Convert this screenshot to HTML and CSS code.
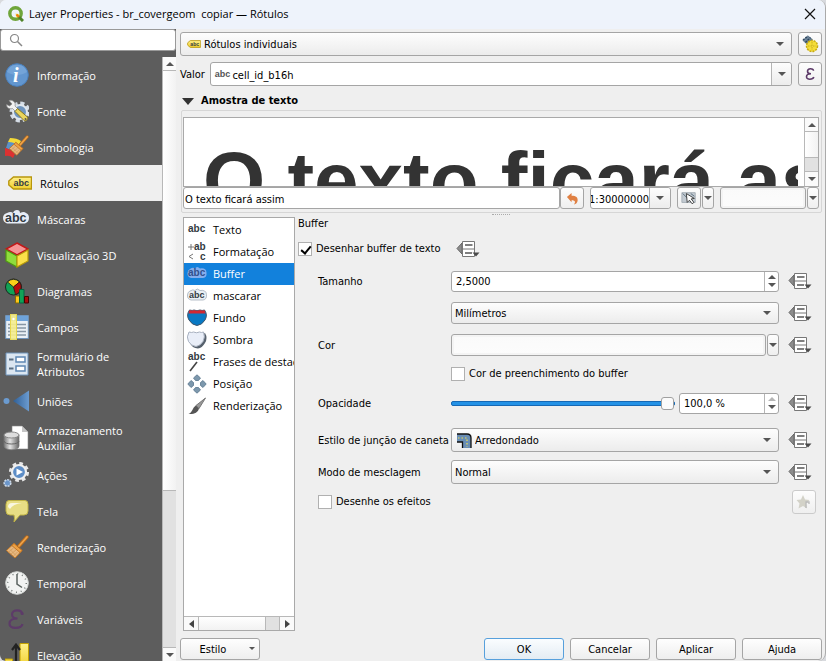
FILE: index.html
```html
<!DOCTYPE html>
<html lang="pt-BR">
<head>
<meta charset="utf-8">
<meta name="viewport" content="width=device-width, initial-scale=1">
<title>Layer Properties - br_covergeom  copiar — Rótulos</title>
<link rel="stylesheet" href="styles.css">
</head>
<body>
<svg class="defs" aria-hidden="true">
  <defs>
    <linearGradient id="g-blue" x1="0" x2="1"><stop offset="0" stop-color="#2f5f96"/><stop offset="1" stop-color="#6b9bd0"/></linearGradient>
    <linearGradient id="g-db" x1="0" x2="1"><stop offset="0" stop-color="#777"/><stop offset=".4" stop-color="#e4e4e4"/><stop offset="1" stop-color="#666"/></linearGradient>
    <linearGradient id="g-yellow" x1="0" y1="0" x2="0" y2="1"><stop offset="0" stop-color="#fff08a"/><stop offset="1" stop-color="#f0cf2c"/></linearGradient>
    <symbol id="i-dd" viewBox="0 0 24 18">
      <path d="M1 8.500 6 3v11z" fill="#8c8c8c" stroke="#666"/>
      <path d="M6.500 1.500h12v15h-12z" fill="#fff" stroke="#777"/>
      <path d="M6 9h13" stroke="#777"/>
      <path d="M9 5h7.500M9 13h7" stroke="#555" stroke-width="1.600"/>
      <path d="M16.500 12.500h7l-3.500 4z" fill="#4a4a4a"/>
    </symbol>
    <symbol id="i-broom" viewBox="0 0 24 24">
      <path d="m22 2-8 9" stroke="#b86a1b" stroke-width="3.400" stroke-linecap="round"/>
      <path d="m22 2-8 9" stroke="#eda34a" stroke-width="1.800" stroke-linecap="round"/>
      <path d="M1.500 15.500 9 8.500l8 7L10 23z" fill="#e6b780" stroke="#c07828"/>
      <path d="M9 8.500l8 7-2 2-8.200-7z" fill="#efa245" stroke="#b86a1b" stroke-width=".8"/>
      <path d="m5 14.500 6 6M3.500 17l5-4M6 19l5-4M8.500 21l4-4" stroke="#cf9a5c" stroke-width=".8"/>
    </symbol>
    <symbol id="i-tag" viewBox="0 0 24 14">
      <path d="M5.500 1h18v12h-18L.8 9V5z" fill="url(#g-yellow)" stroke="#b8960c" stroke-width="1.400"/>
      <text x="5.500" y="10" class="glyph" font-size="9">abc</text>
    </symbol>
  </defs>
</svg>

<div class="window">
  <header class="titlebar">
    <svg class="logo" viewBox="0 0 16 16"><circle cx="7.500" cy="7.500" r="5.700" fill="none" stroke="#6fa53a" stroke-width="3.400"/><path d="m7.500 7.500 4.500 1-3.500 3.500z" fill="#f0e64a"/><path d="m8.500 8.500 3.500 3.500" stroke="#ee7913" stroke-width="2"/><path d="m11 11 4 4" stroke="#4f8429" stroke-width="3"/></svg>
    <h1>Layer Properties - br_covergeom&nbsp; copiar — Rótulos</h1>
    <button class="close" aria-label="Fechar"><svg viewBox="0 0 12 12"><path d="m1 1 10 10M11 1 1 11" stroke="#111" stroke-width="1.200"/></svg></button>
  </header>

  <div class="body">
    <aside class="sidebar">
      <label class="search">
        <svg viewBox="0 0 14 14"><circle cx="5.500" cy="5.500" r="4" fill="none" stroke="#888" stroke-width="1.200"/><path d="m8.500 8.500 4.500 4.500" stroke="#888" stroke-width="1.500"/></svg>
        <input type="search" aria-label="Pesquisar">
      </label>
      <div class="side-scroll">
        <nav class="side-list">
          <button class="side-item"><svg viewBox="0 0 24 24"><circle cx="12" cy="12" r="11.300" fill="#6296cf" stroke="#4a80bd"/><path d="M2 9a10.500 10.500 0 0 1 20 0c-6 4-14 4-20 0z" fill="#80aede" opacity=".6"/><text x="8" y="19" font-family="Liberation Serif" font-style="italic" font-weight="700" font-size="20" fill="#fff">i</text></svg>Informação</button>
          <button class="side-item"><svg viewBox="0 0 24 24"><circle cx="15" cy="13" r="8.500" fill="none" stroke="#d5dde6" stroke-width="4" stroke-dasharray="4 2.675"/><circle cx="15" cy="13" r="7" fill="#6f94bd" stroke="#dfe6ed" stroke-width="2"/><path d="M4 1.500c4-1 7 2 6 5.500l3 3-2.500 2.500-3-3C4 10.500 1.500 8.500 1.500 5.500l3 1.500 2.500-2z" fill="#f3f3f3" stroke="#888" stroke-width=".7"/><path d="m12.500 9.500 10 8.500c1 2-1.500 4.500-3.500 3.500l-9-9z" fill="#e9d55c" stroke="#857522"/><circle cx="20.500" cy="20" r="1" fill="#555"/></svg>Fonte</button>
          <button class="side-item"><svg viewBox="0 0 24 24"><path d="M5 3q7 0 11 3l-3 6-10-5z" fill="#f4da37"/><path d="M3 7q7 0 10 4l-3 6-9-4z" fill="#5b91c8"/><path d="M0 13q4 0 10 6l-2 4q-3-3-8-2z" fill="#dc3131"/><use href="#i-broom" x="3" y="0" width="21" height="21"/></svg>Simbologia</button>
          <button class="side-item selected" aria-current="page"><svg viewBox="0 0 24 24"><use href="#i-tag" y="5" width="24" height="14"/></svg>Rótulos</button>
          <button class="side-item"><svg class="wide" viewBox="0 0 26 24"><path d="M4 6q4-2 6 0 1-3 4-3t3 3q4-2 6 0 3 1 3 5t-4 5.500H4Q0 15 0 11t4-5z" fill="#e7edf7"/><text x="2" y="15" class="glyph" font-size="12.500">abc</text></svg>Máscaras</button>
          <button class="side-item"><svg viewBox="0 0 24 26"><path d="m12 1 11 6-11 6L1 7z" fill="#f59595" stroke="#c01818" stroke-width="1.500"/><path d="M1 8l11 6v11L1 19z" fill="#8fdd3d" stroke="#4f9a10" stroke-width="1.200"/><path d="m23 8-11 6v11l11-6z" fill="#fbe04a" stroke="#b89a08" stroke-width="1.200"/></svg>Visualização 3D</button>
          <button class="side-item"><svg viewBox="0 0 24 26"><circle cx="8.500" cy="9" r="8" fill="#12a156" stroke="#111" stroke-width=".8"/><path d="M8.500 9 2.500 4a8 8 0 0 1 12 0z" fill="#fbd019" stroke="#332"/><path d="m8.500 9 6-5a8 8 0 0 1-4 12.500z" fill="#b40d0d" stroke="#311" stroke-width=".8"/><path d="M10.500 18h4v7h-4z" fill="#fbc61d" stroke="#8a6a00"/><path d="M14.500 11.500h4.500V25h-4.500z" fill="#12a156" stroke="#064"/><path d="M19.500 18.500H23.500V25h-4z" fill="#a60c0c" stroke="#400"/></svg>Diagramas</button>
          <button class="side-item"><svg viewBox="0 0 24 26"><path d="M.700 1.500h22.600v23H.700z" fill="#eaf0f6" stroke="#6f94bb"/><path d="M1 2h22v5H1z" fill="#6ea3da"/><path d="M3 10.500h18M3 14h18M3 17.500h18M3 21h18" stroke="#8796a5" stroke-width="1.500"/><path d="M5.500 0h6v26h-6z" fill="#f6ed8d" fill-opacity=".9" stroke="#e6d64c"/><circle cx="8.500" cy="5" r="1.200" fill="#fff"/></svg>Campos</button>
          <button class="side-item double"><svg viewBox="0 0 24 24"><path d="M1 1h22v22H1z" fill="#dbe6f1" stroke="#6f94bb"/><path d="M11 5h9v5h-9zM11 14h9v5h-9z" fill="#fff" stroke="#5e87b3" stroke-width="1.500"/><path d="M4 7.500h4.500M4 16.500h4.500" stroke="#5b6e82" stroke-width="2"/></svg><span>Formulário de Atributos</span></button>
          <button class="side-item"><svg class="wide" viewBox="0 0 26 24"><circle cx="3.500" cy="12" r="3" fill="#6b9bd0"/><path d="M10 12 26 1.500v21z" fill="url(#g-blue)"/></svg>Uniões</button>
          <button class="side-item double"><svg class="wide" viewBox="0 0 26 26"><path d="M9 1h10l6 6v17H9z" fill="#fff" stroke="#888" stroke-width=".6"/><path d="M19 1v6h6z" fill="#c5c5c5"/><path d="M1 10v11c0 5 15 5 15 0V10z" fill="url(#g-db)" stroke="#777" stroke-width=".7"/><ellipse cx="8.500" cy="10" rx="7.500" ry="3" fill="#ddd" stroke="#888"/><path d="M1 16c0 4 15 4 15 0" fill="none" stroke="#666"/></svg><span>Armazenamento Auxiliar</span></button>
          <button class="side-item"><svg class="wide" viewBox="0 0 26 26"><circle cx="16" cy="10" r="8.300" fill="none" stroke="#e7e7e7" stroke-width="3.500" stroke-dasharray="3.500 3.019"/><circle cx="16" cy="10" r="7" fill="#5d8dc6" stroke="#efefef" stroke-width="2.200"/><path d="m13.500 6.500 6.500 3.500-6.500 3.500z" fill="#fff"/><circle cx="4.500" cy="21" r="3.300" fill="#6b96ca" stroke="#ccd9e8" stroke-width="1.600" stroke-dasharray="2 .960"/></svg>Ações</button>
          <button class="side-item"><svg viewBox="0 0 24 24"><path d="M4 1.500h16q3 0 3 4V12q0 4-4 4h-4l-6 7q1-4 0-7H5q-4 0-4-4V5.500q0-4 3-4z" fill="#e7dd84" stroke="#c0b446"/><path d="M3 8q0-4 4-4h10q-9 1-12 6z" fill="#fff" opacity=".75"/></svg>Tela</button>
          <button class="side-item"><svg viewBox="0 0 24 24"><use href="#i-broom"/></svg>Renderização</button>
          <button class="side-item"><svg viewBox="0 0 24 24"><circle cx="12" cy="12" r="11.300" fill="#f2f3f2" stroke="#d1d4d2"/><circle cx="12" cy="12" r="9.300" fill="none" stroke="#747b78" stroke-width="1.500" stroke-dasharray="1 3.869"/><path d="M12 3v10l5 3.500" fill="none" stroke="#5a625f" stroke-width="1.500"/></svg>Temporal</button>
          <button class="side-item"><svg viewBox="0 0 24 24"><path d="M17.500 7.500C17 2 7 2 7 7.500c0 2.700 3 4 5.500 4-4.500 0-8 1.500-8 5 0 6 12 5.500 13 .5" fill="none" stroke="#5d3b69" stroke-width="2.200"/><circle cx="17" cy="6.500" r="1.500" fill="#5d3b69"/></svg>Variáveis</button>
          <button class="side-item"><svg viewBox="0 0 24 26"><path d="M15 1.500h8.500V26H15zM0 17h7.500v9H0z" fill="url(#g-yellow)" stroke="#c2a000"/><path d="M11 26V3M7 8l4-5.500L15 8" fill="none" stroke="#222" stroke-width="2.200"/></svg>Elevação</button>
        </nav>
        <div class="vbar"><button class="sb up" aria-label="Subir"></button><i class="thumb"></i><i class="track"></i><button class="sb down" aria-label="Descer"></button></div>
      </div>
    </aside>

    <main class="content">
      <div class="top-rows">
        <div class="combo tall">
          <svg class="tag" viewBox="0 0 24 14"><use href="#i-tag" width="24" height="14"/></svg>
          <select aria-label="Modo dos rótulos"><option>Rótulos individuais</option></select>
        </div>
        <button class="tool" aria-label="Posicionamento automático"><svg viewBox="0 0 18 18"><path d="m1.500 5.500 5.500-5 5 4-5 6z" fill="#6d8499"/><path d="m2 5 5-4M4.500 7.500l5-5M7 10l4-5" stroke="#2e4860" stroke-width="1.500" stroke-dasharray="2 1"/><circle cx="11" cy="11" r="5.500" fill="#f5dd37" stroke="#c8ab12" stroke-width="1.500" stroke-dasharray="2 1"/><path d="M11 7v8M7 11h8" stroke="#c9b021" stroke-dasharray="1.500 1"/></svg></button>
      </div>
      <div class="top-rows value-row">
        <label for="valor">Valor</label>
        <div class="combo tall editable">
          <span class="abc">abc</span>
          <input id="valor" value="cell_id_b16h">
          <button class="arrow" aria-label="Abrir lista"></button>
        </div>
        <button class="tool" aria-label="Expressão"><svg viewBox="0 0 18 18"><path d="M12.500 5.700C12.500 3 6.500 3 6.500 6.200c0 1.800 2 2.500 3.500 2.500-2.500 0-4.500 1-4.500 3 0 3.500 6.500 3 7.300.3" fill="none" stroke="#5d3b69" stroke-width="1.600"/></svg></button>
      </div>
      <h2 class="section"><i></i>Amostra de texto</h2>

      <section class="sample">
        <div class="preview">
          <div class="preview-text">O texto ficará assim</div>
          <div class="vbar"><button class="sb up" aria-label="Subir"></button><i class="thumb"></i><i class="track"></i><button class="sb down" aria-label="Descer"></button></div>
        </div>
        <div class="sample-tools">
          <input class="field" aria-label="Texto de amostra" value="O texto ficará assim">
          <button class="tool small undo" aria-label="Restaurar"><svg viewBox="0 0 14 14"><path d="M1 5.500 6 1v3c5 0 7 2 6.500 5.500-.3 2-1.500 3.500-4 4 1.800-2 2-4.500-2.500-4.500v2z" fill="#e08043"/></svg></button>
          <div class="combo editable scale"><input aria-label="Escala" value="1:30000000"><button class="arrow" aria-label="Abrir escalas"></button></div>
          <div class="pair">
            <button class="tool small" aria-label="Usar escala do mapa"><svg viewBox="0 0 18 16"><path d="M1 2h15v11H1z" fill="#c3cbd2" stroke="#a2abb3"/><path d="m2 3 5 5M11 3l4 3" stroke="#536878"/><path d="m6 3 1 10 2.500-2.500 3 4 2-1.500-3-4 3.500-.5z" fill="#fff" stroke="#333"/></svg></button>
            <button class="drop" aria-label="Opções"></button>
          </div>
          <div class="pair swatch-pair">
            <button class="swatch" aria-label="Cor de fundo"></button>
            <button class="drop" aria-label="Opções de cor"></button>
          </div>
        </div>
      </section>
      <div class="grip"></div>

      <div class="split">
        <div class="tabs">
          <nav class="tab-list">
            <button class="tab"><svg viewBox="0 0 20 20"><text x="1" y="12" class="glyph" font-size="10">abc</text></svg>Texto</button>
            <button class="tab"><svg viewBox="0 0 20 20"><text x="7" y="8" class="glyph" font-size="10">ab</text><text x="13" y="18" class="glyph" font-size="10">c</text><path d="M1 5h6M4 2v6M6 12l-4 2.500L6 17" fill="none" stroke="#777"/></svg>Formatação</button>
            <button class="tab selected" aria-current="true"><svg viewBox="0 0 20 20"><path d="M3 5q3-2 5-.500 2-3 5 0 6-1 6.500 4T16 14H4q-4-1-3.500-5Q.500 6 3 5z" fill="#85aeed"/><text x="1" y="12" class="glyph blue" font-size="10">abc</text></svg>Buffer</button>
            <button class="tab"><svg viewBox="0 0 20 20"><path d="M3 5q3-2 5-.500 2-3 5 0 6-1 6.500 4T16 14H4q-4-1-3.500-5Q.500 6 3 5z" fill="#e9eef3" stroke="#a4b0bb" stroke-width=".8"/><text x="2" y="12" class="glyph" font-size="9">abc</text></svg>mascarar</button>
            <button class="tab"><svg viewBox="0 0 20 20"><path d="M2.500 2q3 1 4.500 0 3 1.500 6 0 2 1 4.500 0Q21 7 18 12q-3 5-8 5.500Q5 17 2 12-1 7 2.500 2z" fill="#0879c4" stroke="#40566b"/><path d="M2.500 2q3 1 4.500 0 3 1.500 6 0 2 1 4.500 0l1 3.500h-17z" fill="#cf2832"/></svg>Fundo</button>
            <button class="tab"><svg viewBox="0 0 20 20"><path d="M4 3q3 1 4.500 0 3 1.500 6 0 2 1 3.500 0 3 5 0 10-3 5-7 5.500Q5 18 3 13 0 8 4 3z" fill="#56616d"/><path d="M2 2q3 1 4.500 0 3 1.500 6 0 2 1 4 0 2 5-.500 9.500Q13 16 9 16.500q-5-.500-7.500-5Q-1 7 2 2z" fill="#e9eef8" stroke="#a7b0bf"/></svg>Sombra</button>
            <button class="tab"><svg viewBox="0 0 20 20"><text x="1" y="8" class="glyph" font-size="10">abc</text><path d="m10 10-7 9" stroke="#444" stroke-width="1.600"/></svg>Frases de destaque</button>
            <button class="tab"><svg viewBox="0 0 20 20"><path d="m10 .800 3.500 3.200-2 2.500h-3l-2-2.500zM10 19.200l3.500-3.200-2-2.500h-3l-2 2.500zM.800 10 4 6.500l2.500 2v3L4 13.500zM19.200 10 16 6.500l-2.500 2v3l2.500 2z" fill="#7d98ad" stroke="#58758c" stroke-width=".8"/></svg>Posição</button>
            <button class="tab"><svg viewBox="0 0 20 20"><path d="M18.500 2 9 9.500l3 3z" fill="#999" stroke="#777"/><path d="m9 9.500 3 3c-1 4-5 6-10.500 5.500C6 16 5 12 9 9.500z" fill="#555"/></svg>Renderização</button>
          </nav>
          <div class="hbar"><button class="sb left" aria-label="Esquerda"></button><i class="thumb"></i><i class="track"></i><button class="sb right" aria-label="Direita"></button></div>
        </div>

        <form class="panel">
          <div class="panel-title">Buffer</div>
          <div class="head-row">
            <label class="check"><input type="checkbox" checked>Desenhar buffer de texto</label>
            <button type="button" class="dd" aria-label="Definido por dados"><svg><use href="#i-dd"/></svg></button>
          </div>
          <div class="row">
            <label for="tam">Tamanho</label>
            <div class="spin"><input id="tam" value="2,5000"><span class="steps"><button type="button" class="sb up" aria-label="Aumentar"></button><button type="button" class="sb down" aria-label="Diminuir"></button></span></div>
            <button type="button" class="dd" aria-label="Definido por dados"><svg><use href="#i-dd"/></svg></button>
          </div>
          <div class="row">
            <span></span>
            <div class="combo"><select aria-label="Unidade"><option>Milímetros</option></select></div>
            <button type="button" class="dd" aria-label="Definido por dados"><svg><use href="#i-dd"/></svg></button>
          </div>
          <div class="row">
            <label for="cor">Cor</label>
            <div class="pair"><button type="button" id="cor" class="swatch"></button><button type="button" class="drop" aria-label="Opções de cor"></button></div>
            <button type="button" class="dd" aria-label="Definido por dados"><svg><use href="#i-dd"/></svg></button>
          </div>
          <div class="row fill">
            <span></span>
            <label class="check"><input type="checkbox">Cor de preenchimento do buffer</label>
          </div>
          <div class="row opacity">
            <label for="opa">Opacidade</label>
            <div class="slide">
              <input type="range" id="opa" min="0" max="100" value="100">
              <div class="spin"><input aria-label="Opacidade em porcentagem" value="100,0 %"><span class="steps"><button type="button" class="sb up off" aria-label="Aumentar" disabled></button><button type="button" class="sb down" aria-label="Diminuir"></button></span></div>
            </div>
            <button type="button" class="dd" aria-label="Definido por dados"><svg><use href="#i-dd"/></svg></button>
          </div>
          <div class="row join">
            <label for="join">Estilo de junção de caneta</label>
            <div class="combo tall">
              <svg class="join-icon" viewBox="0 0 15 15"><path d="M0 1h10q4 0 4 4v10H6V9H0z" fill="#6a8eb5"/><path d="M0 1h10q4 0 4 4v10M0 9h5.500v6" fill="none" stroke="#111" stroke-width="1.300"/><path d="M1 5h9v9" fill="none" stroke="#eee04f" stroke-width="1.200" stroke-dasharray="1.500 2"/></svg>
              <select id="join"><option>Arredondado</option></select>
            </div>
            <button type="button" class="dd" aria-label="Definido por dados"><svg><use href="#i-dd"/></svg></button>
          </div>
          <div class="row">
            <label for="blend">Modo de mesclagem</label>
            <div class="combo tall"><select id="blend"><option>Normal</option></select></div>
            <button type="button" class="dd" aria-label="Definido por dados"><svg><use href="#i-dd"/></svg></button>
          </div>
          <div class="effects">
            <label class="check"><input type="checkbox">Desenhe os efeitos</label>
            <button type="button" class="tool star" aria-label="Personalizar efeitos" disabled><svg viewBox="0 0 16 16"><path d="m7 1 2 4.500 4.500.5-3.500 3.500 1 5L7 12l-4.500 2.500 1-5L.500 6 5 5.500z" fill="#d3d2c8"/><path d="M10 14V8h3v2" fill="none" stroke="#bbb" stroke-width="1.300"/></svg></button>
          </div>
        </form>
      </div>

      <footer class="footer">
        <button class="btn style">Estilo</button>
        <span class="space"></span>
        <button class="btn primary">OK</button>
        <button class="btn">Cancelar</button>
        <button class="btn">Aplicar</button>
        <button class="btn">Ajuda</button>
      </footer>
    </main>
  </div>
</div>
</body>
</html>
```
FILE: styles.css
```css
* { box-sizing: border-box; }
body { margin: 0; background: #d8dade; color: #000; font-family: "DejaVu Sans Condensed", "Liberation Sans", sans-serif; font-size: 11px; line-height: 14px; }
button, input, select { font: inherit; color: inherit; margin: 0; padding: 0; border: 0; background: none; border-radius: 0; outline: 0; min-width: 0; }
svg { display: block; flex: none; }
.defs { position: absolute; width: 0; height: 0; }
.glyph { font-family: "Liberation Sans", sans-serif; font-weight: 700; fill: #333b42; }
.glyph.blue { fill: #33518c; }

.window { height: 100vh; display: flex; flex-direction: column; overflow: hidden; background: #efefef; border-right: 1px solid #aaa; border-radius: 6px 8px 8px 6px; }
.titlebar { flex: none; display: flex; align-items: center; height: 29px; padding: 0 9px 2px 8px; background: #eef3fb; font-family: "Open Sans", "Noto Sans", sans-serif; }
.titlebar h1 { flex: 1; margin: 0 0 0 5px; font-size: 11px; font-weight: 400; line-height: 16px; white-space: nowrap; }
.logo { width: 16px; height: 16px; }
.close svg { width: 12px; height: 12px; }
.body { flex: 1; min-height: 0; display: flex; }

.sidebar { flex: none; width: 176px; display: flex; flex-direction: column; background: #5d5d5d; }
.search { flex: none; display: flex; align-items: center; gap: 6px; height: 22px; padding: 0 8px; background: #fff; border: 1px solid #999; border-radius: 3px; }
.search svg { width: 14px; height: 14px; }
.search input { flex: 1; appearance: none; }
.side-scroll { flex: 1; min-height: 0; display: flex; padding-top: 6px; }
.side-list { flex: 1; overflow: hidden; display: flex; flex-direction: column; }
.side-item { flex: none; display: flex; align-items: center; gap: 8px; height: 36px; padding-left: 5px; color: #fff; font-family: "Open Sans", "Noto Sans", sans-serif; font-size: 11px; line-height: 15px; text-align: left; }
.side-item.double { height: 38px; }
.side-item span { width: 96px; }
.side-item svg { width: 24px; height: 26px; }
.side-item svg.wide { width: 26px; margin-left: -2px; }
.side-item.selected { padding-left: 8px; background: #efefef; color: #000; }

.vbar { flex: none; display: flex; flex-direction: column; width: 14px; background: #fafafa; border-left: 1px solid #b8b8b8; }
.vbar .thumb { background: linear-gradient(90deg, #fff, #f2f2f2); }
.vbar .track { background: #e1e1e1; border: solid #b8b8b8; border-width: 1px 0; }
.sidebar .thumb { flex: 420; }
.sidebar .track { flex: 156; }
.sb { position: relative; display: flex; align-items: center; justify-content: center; flex: none; height: 14px; }
.sidebar .down { height: 13px; }
.vbar .up { border-bottom: 1px solid #b8b8b8; }
.sb::after, .arrow::after, .drop::after, .combo:not(.editable)::after { content: ""; border: 4px solid transparent; border-bottom: 0; border-top-color: #555; }
.sb.up::after { border-bottom: 4px solid #555; border-top: 0; }
.sb.up.off::after { border-bottom-color: #b5b5b5; }
.sb.left::after { border: 4px solid transparent; border-left: 0; border-right: 5px solid #444; }
.sb.right::after { border: 4px solid transparent; border-right: 0; border-left: 5px solid #444; }

.content { flex: 1; min-width: 0; display: flex; flex-direction: column; padding: 3px 3px 1px 4px; }
.top-rows { flex: none; display: flex; align-items: center; gap: 6px; }
.value-row { margin-top: 6px; }
.value-row label { margin-right: -1px; padding-top: 2px; }
.combo { position: relative; flex: 1; min-width: 0; display: flex; align-items: center; height: 22px; border: 1px solid #a5a5a5; border-radius: 3px; background: linear-gradient(#fdfdfd, #ececec); }
.combo.tall { height: 24px; }
.combo select { flex: 1; height: 100%; appearance: none; padding: 2px 0 0 3px; }
.combo:not(.editable)::after { position: absolute; right: 7px; top: calc(50% - 2px); pointer-events: none; }
.combo .tag { width: 14px; height: 8px; margin: 0 0 0 6px; }
.combo.editable { background: #fff; }
.combo.editable input { flex: 1; height: 100%; padding: 2px 0 0 2px; }
.abc { padding: 0 0 1px 4px; font-family: "Liberation Sans", sans-serif; font-weight: 700; font-size: 9px; color: #555; }
.arrow { display: flex; align-items: center; justify-content: center; width: 20px; height: 100%; border-left: 1px solid #b5b5b5; background: linear-gradient(#fdfdfd, #ececec); border-radius: 0 3px 3px 0; }
.tool { flex: none; display: flex; align-items: center; justify-content: center; width: 24px; height: 24px; border: 1px solid #a5a5a5; border-radius: 3px; background: linear-gradient(#fdfdfd, #efefef); }
.tool svg { width: 18px; height: 18px; }
.tool.small { height: 22px; }
.tool.small svg { width: 16px; height: 16px; }
.tool.undo svg { width: 13px; height: 13px; }
.section { flex: none; display: flex; align-items: center; gap: 7px; margin: 8px 0 2px 2px; font-size: 11px; font-weight: 700; line-height: 14px; }
.section i { border: 6px solid transparent; border-top: 7px solid #333; border-bottom: 0; }

.sample { flex: none; margin: 0 0 0 1px; padding: 6px 2px 3px 1px; border: 1px solid #d6d6d6; border-radius: 2px; }
.preview { display: flex; height: 70px; overflow: hidden; background: #fff; border: 1px solid #a9a9a9; }
.preview-text { flex: 1; overflow: hidden; margin-right: 6px; padding: 23px 0 0 19px; font-family: "Liberation Sans", sans-serif; font-size: 80px; line-height: 80px; font-weight: 700; color: #333; white-space: nowrap; }
.preview .vbar .thumb { flex: 2; }
.preview .vbar .track { flex: 1; }
.sample-tools { display: flex; gap: 6px; }
.field { flex: 1; height: 22px; padding: 2px 0 0 1px; border: 1px solid #a5a5a5; border-radius: 3px; background: #fff; }
.undo { margin-left: -6px; }
.combo.scale { flex: none; width: 81px; }
.combo.scale input { padding: 2px 0 0; direction: rtl; width: 58px; flex: none; }
.combo.scale .arrow { flex: 1; }
.pair { display: flex; gap: 1px; height: 22px; }
.drop { flex: none; display: flex; align-items: center; justify-content: center; width: 12px; border: 1px solid #a5a5a5; border-radius: 3px; background: linear-gradient(#fdfdfd, #efefef); }
.swatch { flex: 1; border: 1px solid #a5a5a5; border-radius: 3px; background: linear-gradient(#fafafa, #fcfcfc); box-shadow: inset 0 0 0 2px #f4f4f4; }
.swatch-pair { width: 99px; }
.grip { flex: none; align-self: center; width: 18px; height: 3px; border-top: 1px dotted #aaa; margin-top: 1px; }

.split { flex: 1; min-height: 0; display: flex; gap: 3px; padding-left: 3px; }
.tabs { flex: none; width: 112px; display: flex; flex-direction: column; background: #fff; border: 1px solid #a9a9a9; }
.tab-list { flex: 1; min-height: 0; overflow: hidden; padding-top: 1px; }
.tab { display: flex; align-items: center; gap: 6px; width: 100%; height: 22px; padding-left: 3px; font-family: "Open Sans", "Noto Sans", sans-serif; font-size: 11px; white-space: nowrap; }
.tab svg { width: 20px; height: 20px; }
.tab.selected { background: #1281dc; color: #fff; }
.hbar { flex: none; display: flex; height: 14px; border-top: 1px solid #b8b8b8; background: #fafafa; }
.hbar .sb { width: 14px; height: 13px; }
.hbar .thumb { flex: 68; border-left: 1px solid #b8b8b8; background: linear-gradient(#fff, #f2f2f2); }
.hbar .track { flex: 14; border: solid #b8b8b8; border-width: 0 1px; background: #e1e1e1; }

.panel { flex: 1; min-width: 0; margin: 0; padding-right: 10px; }
.panel-title { height: 14px; }
.head-row { display: flex; align-items: center; gap: 15px; height: 22px; margin: 7px 0 10px; }
.check { display: flex; align-items: center; gap: 4px; white-space: nowrap; }
.check input { appearance: none; position: relative; width: 14px; height: 14px; border: 1px solid #b0b0b0; background: #fff; }
.check input:checked::after { content: ""; position: absolute; left: 4px; top: 1px; width: 4px; height: 8px; border: solid #000; border-width: 0 2px 2px 0; transform: rotate(40deg); }
.row { display: grid; grid-template-columns: 124px 1fr 24px; align-items: center; column-gap: 9px; min-height: 22px; margin-bottom: 10px; padding-left: 20px; }
.row > label:first-child { white-space: nowrap; padding-top: 2px; }
.dd, .dd svg { width: 24px; height: 18px; }
.spin { display: flex; height: 21px; border: 1px solid #a5a5a5; border-radius: 3px; background: #fff; }
.spin input { flex: 1; padding: 2px 0 0 4px; }
.steps { flex: none; display: flex; flex-direction: column; justify-content: center; width: 14px; border-left: 1px solid #b5b5b5; }
.steps .sb { height: 8px; }
.row.fill { min-height: 16px; }
.row > .check:last-child { padding: 0; }
.row.opacity { margin-bottom: 14px; }
.row.join { margin-bottom: 8px; }
.slide { display: flex; gap: 4px; align-items: center; }
.slide .spin { flex: none; width: 100px; }
.slide input[type="range"] { flex: 1; appearance: none; height: 14px; }
.slide input[type="range"]::-webkit-slider-runnable-track { height: 5px; border: 1px solid #1769b5; border-radius: 2px; background: #2492e6; }
.slide input[type="range"]::-webkit-slider-thumb { appearance: none; width: 13px; height: 13px; margin-top: -5px; border: 1px solid #a0a0a0; border-radius: 3px; background: #fbfbfb; }
.join-icon { width: 15px; height: 15px; margin-left: 5px; }
.effects { display: flex; align-items: center; justify-content: space-between; height: 24px; margin-top: -4px; padding: 0 0 0 20px; }
.star { border-color: #cbcbcb; margin-right: -4px; }
.star svg { width: 16px; height: 16px; }

.footer { flex: none; display: flex; gap: 6px; padding-top: 7px; }
.space { flex: 1; }
.btn { position: relative; width: 80px; height: 22px; padding-top: 1px; border: 1px solid #a5a5a5; border-radius: 3px; background: linear-gradient(#fefefe, #eee); }
.btn.primary { border-color: #57a0dc; background: linear-gradient(#fafdff, #e4ecf3); }
.btn.style { padding-right: 14px; }
.btn.style::after { content: ""; position: absolute; right: 4px; top: 8px; border: 3px solid transparent; border-top-color: #555; border-bottom: 0; }
```
